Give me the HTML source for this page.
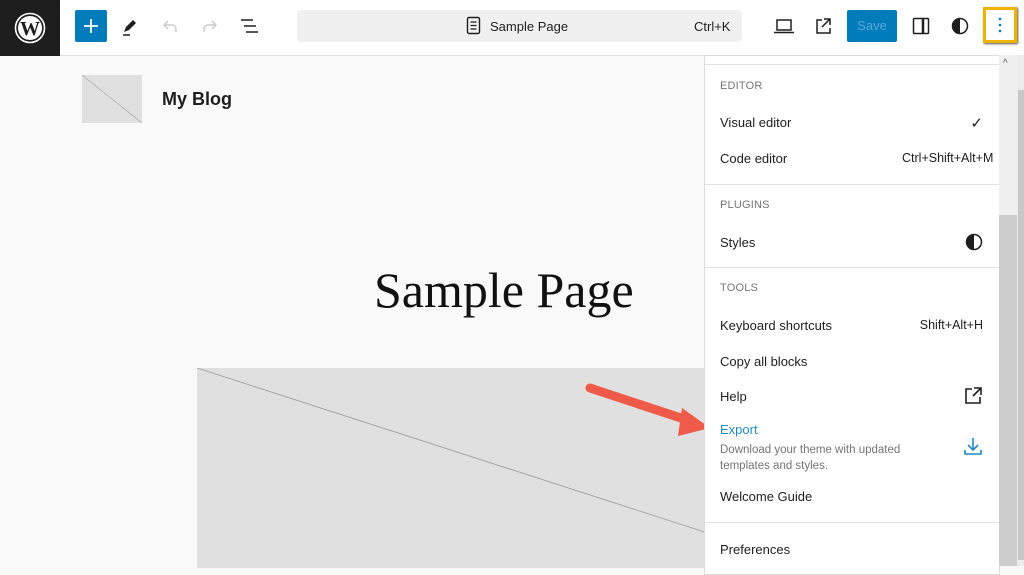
<!DOCTYPE html>
<html><head><meta charset="utf-8"><style>
*{margin:0;padding:0;box-sizing:border-box}
body{width:1024px;height:566px;overflow:hidden;background:#f9f9f9;font-family:"Liberation Sans",sans-serif;position:relative;color:#1e1e1e}
.hdr{position:absolute;left:0;top:0;width:1024px;height:56px;background:#fff;border-bottom:1px solid #e0e0e0}
.wp{position:absolute;left:0;top:0;width:60px;height:56px;background:#1e1e1e}
.abs{position:absolute}
.menu{position:absolute;left:704px;top:55px;width:296px;height:520px;background:#fff;border:1px solid #ddd;font-size:13px}
.sec{position:absolute;left:15px;font-size:11px;color:#757575;letter-spacing:.2px}
.it{position:absolute;left:15px;font-size:13px;color:#1e1e1e}
.hr{position:absolute;left:0;width:294px;height:1px;background:#e0e0e0}
.r{position:absolute;right:16px;font-size:12.5px;color:#1e1e1e}
</style></head><body>
<div class="hdr"></div>
<div class="wp"><svg class="abs" style="left:14px;top:12px" width="32" height="32" viewBox="0 0 32 32"><circle cx="16" cy="16" r="14.5" fill="none" stroke="#fff" stroke-width="1.6"/><circle cx="16" cy="16" r="12" fill="#fff"/><text x="16" y="23" fill="#1e1e1e" font-family="Liberation Serif" font-weight="bold" font-size="20" text-anchor="middle">W</text></svg></div>
<div class="abs" style="left:75px;top:10px;width:32px;height:32px;background:#007cba;border-radius:2px"><svg width="32" height="32"><path d="M16 9v14M9 16h14" stroke="#fff" stroke-width="1.8"/></svg></div>
<svg class="abs" style="left:118px;top:14px" width="24" height="24"><path d="M6 18l2-5 7-7 3 3-7 7z" fill="#1e1e1e"/><path d="M5 21h7" stroke="#1e1e1e" stroke-width="1.5"/></svg>
<svg class="abs" style="left:158px;top:14px" width="24" height="24"><path d="M18 18v-3a4 4 0 0 0-4-4H7M10 7l-4 4 4 4" fill="none" stroke="#ccc" stroke-width="1.5"/></svg>
<svg class="abs" style="left:198px;top:14px" width="24" height="24"><path d="M6 18v-3a4 4 0 0 1 4-4h7M14 7l4 4-4 4" fill="none" stroke="#ccc" stroke-width="1.5"/></svg>
<svg class="abs" style="left:237px;top:14px" width="24" height="24"><path d="M4 6h12M7 12h12M9 18h12" stroke="#1e1e1e" stroke-width="1.6"/></svg>
<div class="abs" style="left:297px;top:10px;width:445px;height:32px;background:#f0f0f0;border-radius:4px"></div>
<svg class="abs" style="left:465px;top:16px" width="18" height="20"><rect x="2.5" y="1.5" width="12" height="16" rx="1.5" fill="none" stroke="#1e1e1e" stroke-width="1.4"/><path d="M5.5 6h6M5.5 9.5h6M5.5 13h6" stroke="#1e1e1e" stroke-width="1.3"/></svg>
<div class="abs" style="left:490px;top:19px;font-size:13px">Sample Page</div>
<div class="abs" style="left:694px;top:19px;font-size:13px">Ctrl+K</div>
<svg class="abs" style="left:772px;top:14px" width="24" height="24"><rect x="5" y="6" width="14" height="10" fill="none" stroke="#1e1e1e" stroke-width="1.5"/><path d="M2 18.5h20" stroke="#1e1e1e" stroke-width="1.5"/></svg>
<svg class="abs" style="left:811px;top:14px" width="24" height="24"><path d="M11 6H6v13h13v-5M13 5h6v6M19 5l-8 8" fill="none" stroke="#1e1e1e" stroke-width="1.5"/></svg>
<div class="abs" style="left:847px;top:10px;width:50px;height:32px;background:#007cba;border-radius:2px;color:#5aa7d6;font-size:13px;text-align:center;line-height:32px">Save</div>
<svg class="abs" style="left:909px;top:14px" width="24" height="24"><rect x="4.5" y="4.5" width="15" height="15" rx="1" fill="none" stroke="#1e1e1e" stroke-width="1.5"/><path d="M14 4.5v15" stroke="#1e1e1e" stroke-width="2.5"/></svg>
<svg class="abs" style="left:948px;top:14px" width="24" height="24"><circle cx="12" cy="12" r="7.5" fill="none" stroke="#1e1e1e" stroke-width="1.5"/><path d="M12 4.5a7.5 7.5 0 0 0 0 15z" fill="#1e1e1e"/></svg>
<div class="abs" style="left:983px;top:7px;width:34px;height:36px;border:3px solid #f0b400;background:#fff;box-shadow:1px 1px 2px #555"></div>
<svg class="abs" style="left:997px;top:15px" width="6" height="20"><circle cx="3" cy="4" r="1.3" fill="#007cba"/><circle cx="3" cy="10" r="1.3" fill="#007cba"/><circle cx="3" cy="16" r="1.3" fill="#007cba"/></svg>

<div class="abs" style="left:82px;top:75px;width:60px;height:48px;background:#e0e0e0"><svg width="60" height="48"><path d="M0 0L60 48" stroke="#aaa" stroke-width=".7"/></svg></div>
<div class="abs" style="left:162px;top:89px;font-size:18px;font-weight:bold">My Blog</div>
<div class="abs" style="left:374px;top:261px;font-family:'Liberation Serif',serif;font-size:50px;color:#111">Sample Page</div>
<div class="abs" style="left:197px;top:368px;width:520px;height:200px;background:#e0e0e0"><svg width="520" height="200"><path d="M0 0L520 168" stroke="#999" stroke-width=".8"/></svg></div>

<svg class="abs" style="left:582px;top:378px" width="130" height="60"><path d="M8 10L108 43" stroke="#f05a48" stroke-width="9" stroke-linecap="round"/><path d="M100 30L128 50L96 58z" fill="#f05a48"/></svg>

<div class="menu">
<div class="hr" style="top:8px"></div>
<div class="sec" style="top:24px">EDITOR</div>
<div class="it" style="top:59px">Visual editor</div>
<div class="r" style="top:58px;font-size:15px">✓</div>
<div class="it" style="top:95px">Code editor</div>
<div class="abs" style="left:197px;top:95px;font-size:12.5px;white-space:nowrap">Ctrl+Shift+Alt+M</div>
<div class="hr" style="top:128px"></div>
<div class="sec" style="top:143px">PLUGINS</div>
<div class="it" style="top:179px">Styles</div>
<svg class="abs" style="left:259px;top:176px" width="20" height="20"><circle cx="10" cy="10" r="7.5" fill="none" stroke="#1e1e1e" stroke-width="1.5"/><path d="M10 2.5a7.5 7.5 0 0 0 0 15z" fill="#1e1e1e"/></svg>
<div class="hr" style="top:211px"></div>
<div class="sec" style="top:226px">TOOLS</div>
<div class="it" style="top:262px">Keyboard shortcuts</div>
<div class="r" style="top:262px">Shift+Alt+H</div>
<div class="it" style="top:298px">Copy all blocks</div>
<div class="it" style="top:333px">Help</div>
<svg class="abs" style="left:258px;top:330px" width="20" height="20"><path d="M9 3H3v14h14v-6M11 2h7v7M18 2l-8 8" fill="none" stroke="#1e1e1e" stroke-width="1.6"/></svg>
<div class="it" style="top:366px;color:#1e8cc8">Export</div>
<div class="abs" style="left:15px;top:386px;font-size:11.5px;color:#757575;line-height:16px;width:220px">Download your theme with updated templates and styles.</div>
<svg class="abs" style="left:258px;top:380px" width="20" height="20"><path d="M10 2v11M5 9l5 5 5-5M2 14v4h16v-4" fill="none" stroke="#1e8cc8" stroke-width="1.6"/></svg>
<div class="it" style="top:433px">Welcome Guide</div>
<div class="hr" style="top:466px"></div>
<div class="it" style="top:486px">Preferences</div>
</div>
<div class="abs" style="left:999px;top:55px;width:18px;height:511px;background:#f0f0f0"></div>
<div class="abs" style="left:999px;top:215px;width:18px;height:351px;background:#cdcdcd"></div>
<div class="abs" style="left:1003px;top:58px;font-size:10px;color:#555">^</div>
<div class="abs" style="left:1017px;top:55px;width:7px;height:511px;background:#ececec"></div>
<div class="abs" style="left:1018px;top:90px;width:6px;height:470px;background:#c8c8c8"></div>
</body></html>
